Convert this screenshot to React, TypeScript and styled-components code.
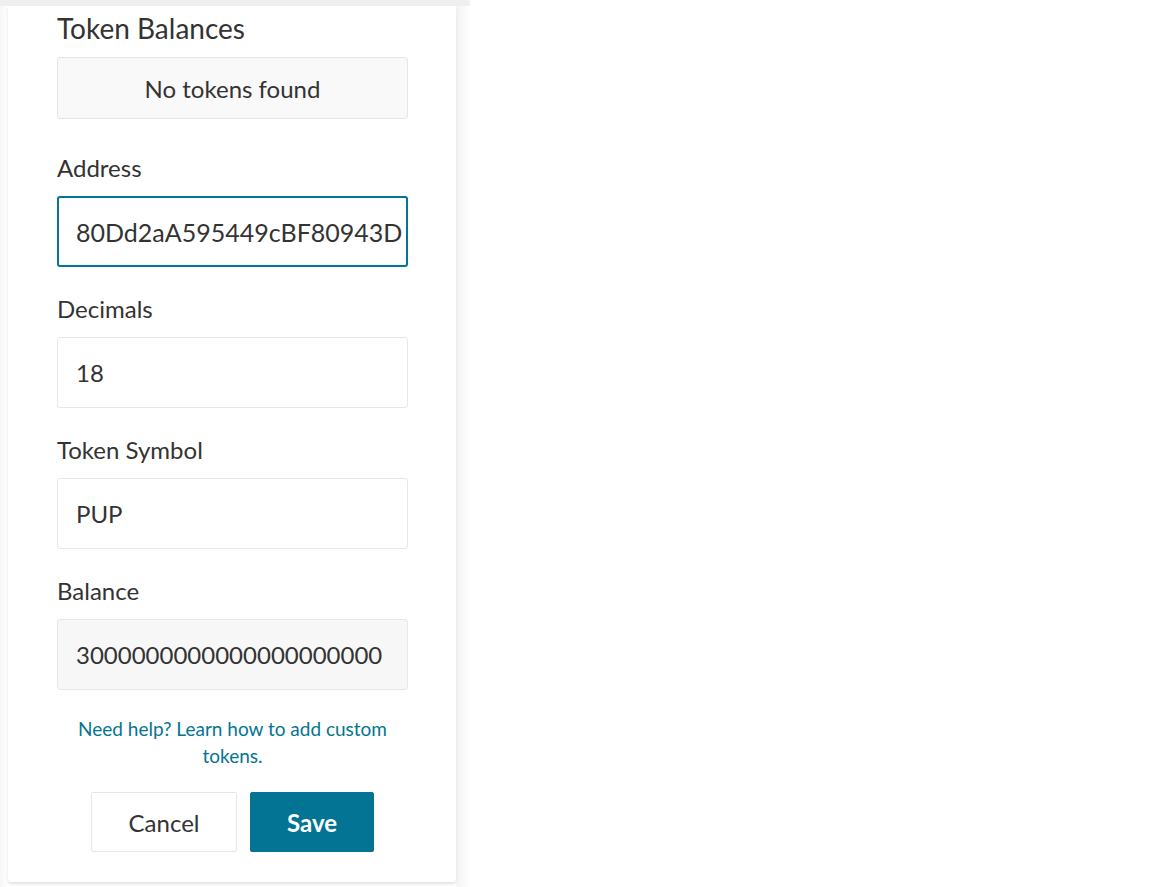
import React from "react";
import styled, { createGlobalStyle } from "styled-components";

const Global = createGlobalStyle`
  html, body { margin: 0; padding: 0; background: #ffffff; }
  body { font-family: Lato, "Noto Sans", sans-serif; color: #333333; }
  * { box-sizing: border-box; }
`;

const Shell = styled.div`
  width: 470px;
  height: 887px;
  display: flex;
  flex-direction: column;
  background: #f7f7f7;
  overflow: hidden;
`;

const TopStrip = styled.div`
  height: 6px;
  flex: none;
  background: #efefef;
`;

const Body = styled.div`
  flex: 1;
  padding: 0 14px 0 8px;
  background: linear-gradient(90deg, #f6f6f6 0px, #ffffff 8px, #ffffff 456px, #f4f4f4 457px, #ffffff 470px);
`;

const Card = styled.div`
  width: 448px;
  height: 876px;
  background: #ffffff;
  border-radius: 0 0 3px 3px;
  box-shadow: 0 2px 3px rgba(0, 0, 0, 0.12);
  padding: 6px 48px 0 49px;
  display: flex;
  flex-direction: column;
`;

const Title = styled.h2`
  margin: 0;
  font-size: 28px;
  font-weight: 400;
  line-height: 32px;
  color: #333333;
`;

const EmptyBox = styled.div`
  margin-top: 13px;
  margin-bottom: 7px;
  height: 62px;
  display: flex;
  align-items: center;
  justify-content: center;
  background: #f9f9f9;
  border: 1px solid #e6e6e6;
  border-radius: 3px;
  font-size: 24px;
  color: #333333;
`;

const Field = styled.div`
  display: flex;
  flex-direction: column;
  margin-top: 27px;
`;

const Label = styled.label`
  font-size: 24px;
  line-height: 29px;
  color: #333333;
  margin-bottom: 14px;
`;

const Input = styled.div<{ $focused?: boolean; $readOnly?: boolean }>`
  height: 71px;
  display: flex;
  align-items: center;
  padding: 0 ${(p) => (p.$focused ? 17 : 18)}px;
  border: ${(p) => (p.$focused ? "2px solid #037493" : "1px solid #e3e8ef")};
  border-radius: 3px;
  background: ${(p) => (p.$readOnly ? "#f7f7f7" : "#ffffff")};
  font-size: ${(p) => (p.$focused ? 25 : 24)}px;
  color: #333333;
  white-space: nowrap;
  overflow: hidden;
`;

const Help = styled.a`
  margin-top: 25px;
  text-align: center;
  font-size: 19px;
  line-height: 27px;
  color: #037493;
  text-decoration: none;
  padding: 0 8px;
`;

const Actions = styled.div`
  margin-top: 23px;
  display: flex;
  justify-content: center;
  gap: 13px;
`;

const Button = styled.button<{ $primary?: boolean }>`
  height: 60px;
  width: ${(p) => (p.$primary ? 124 : 146)}px;
  font-family: Lato, "Noto Sans", sans-serif;
  font-size: 24px;
  font-weight: ${(p) => (p.$primary ? 700 : 400)};
  color: ${(p) => (p.$primary ? "#ffffff" : "#333333")};
  background: ${(p) => (p.$primary ? "#037493" : "#ffffff")};
  border: 1px solid ${(p) => (p.$primary ? "#037493" : "#e3e8ef")};
  border-radius: 2px;
  cursor: pointer;
`;

const fields = [
  { label: "Address", value: "80Dd2aA595449cBF80943D", focused: true },
  { label: "Decimals", value: "18" },
  { label: "Token Symbol", value: "PUP" },
  { label: "Balance", value: "3000000000000000000000", readOnly: true },
];

export default function App() {
  return (
    <>
      <Global />
      <Shell>
        <TopStrip />
        <Body>
          <Card>
            <Title>Token Balances</Title>
            <EmptyBox>No tokens found</EmptyBox>
            {fields.map((f) => (
              <Field key={f.label}>
                <Label>{f.label}</Label>
                <Input $focused={f.focused} $readOnly={f.readOnly}>
                  {f.value}
                </Input>
              </Field>
            ))}
            <Help href="#">Need help? Learn how to add custom tokens.</Help>
            <Actions>
              <Button>Cancel</Button>
              <Button $primary>Save</Button>
            </Actions>
          </Card>
        </Body>
      </Shell>
    </>
  );
}
